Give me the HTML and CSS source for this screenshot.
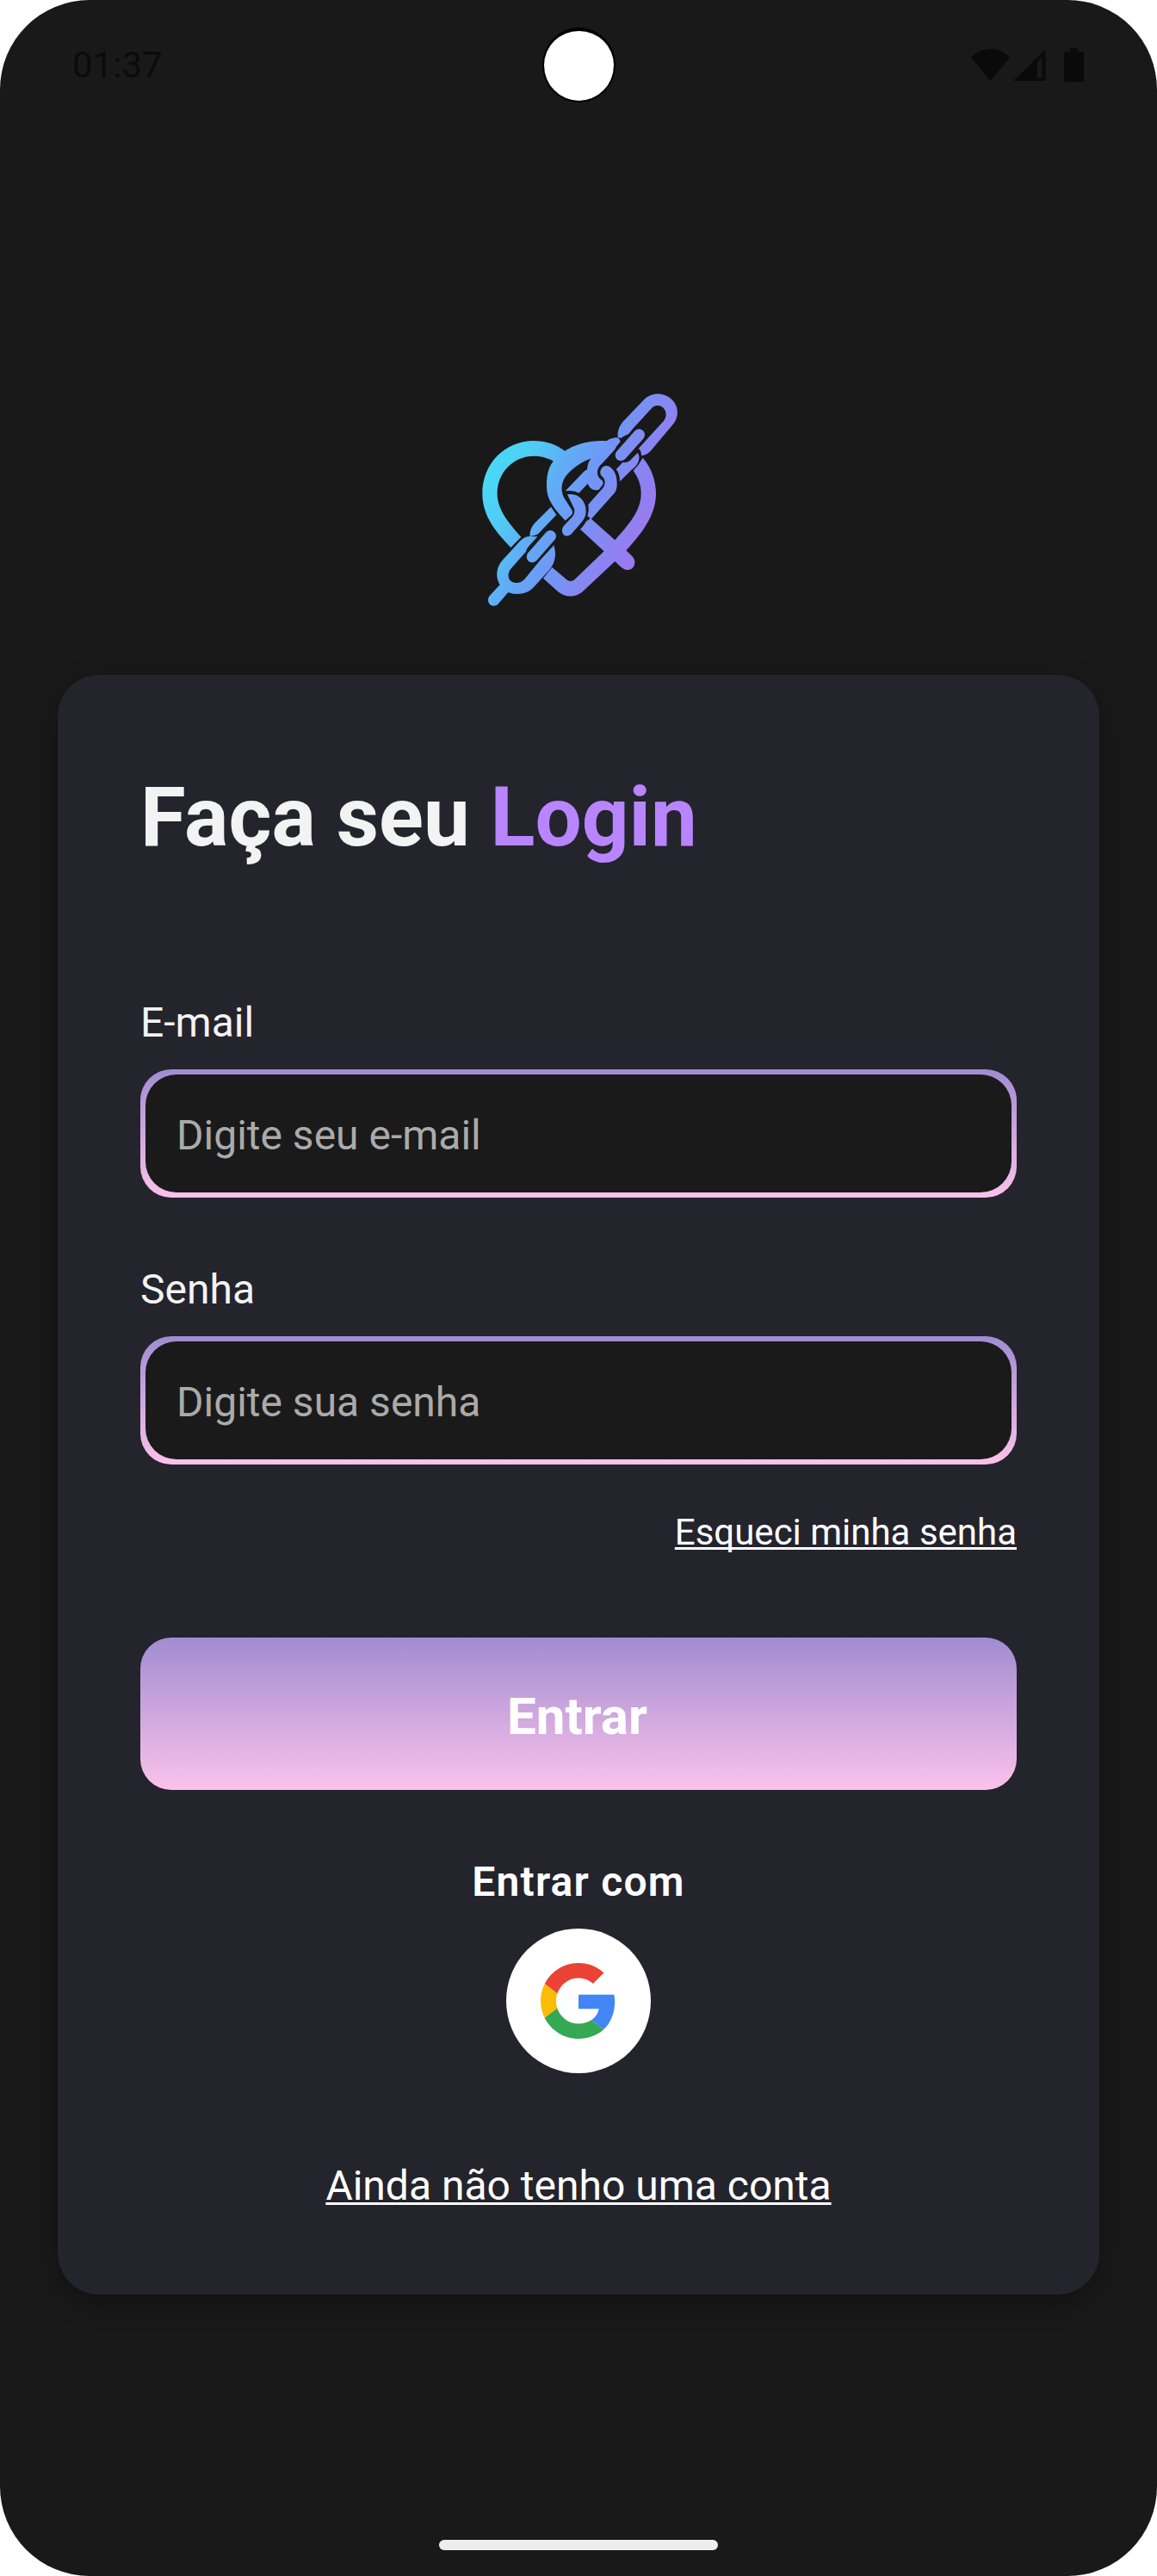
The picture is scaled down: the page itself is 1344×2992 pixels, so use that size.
FILE: index.html
```html
<!DOCTYPE html>
<html lang="pt-BR">
<head>
<meta charset="utf-8">
<title>Login</title>
<link rel="stylesheet" href="styles.css">
</head>
<body>
<div class="screen">
  <header class="status-bar">
    <span class="clock">01:37</span>
    <span class="camera"></span>
    <svg class="status-icons" viewBox="0 0 134 42" aria-hidden="true">
      <path d="M0 12.7C13 -.6 32 -.6 45 12.7L22.5 40Z"/>
      <path fill-rule="evenodd" d="M49 40L86.500 3V40ZM77 18V36.500H82.500V12.500Z"/>
      <path d="M115 2h9.300v4h4.700a2 2 0 0 1 2 2v31a2 2 0 0 1-2 2h-19a2 2 0 0 1-2-2v-31a2 2 0 0 1 2-2h5z"/>
    </svg>
  </header>

  <svg class="logo" viewBox="0 0 792 840" role="img" aria-label="Logo">
    <defs>
      <linearGradient id="brand" gradientUnits="userSpaceOnUse" x1="90" y1="300" x2="650" y2="560">
        <stop offset="0" stop-color="#48d9f6"/>
        <stop offset=".18" stop-color="#50ccf4"/>
        <stop offset=".36" stop-color="#5eaef6"/>
        <stop offset=".55" stop-color="#7097f5"/>
        <stop offset=".78" stop-color="#8985f2"/>
        <stop offset="1" stop-color="#9f76ee"/>
      </linearGradient>
    </defs>
    <g fill="url(#brand)">
      <path d="M352 254C320 228 280 216 240 216C140 216 61 295 61 400C61 480 110 535 160 588L196 551C150 500 113 455 113 400C113 325 170 269 240 269C268 269 295 277 313 290Z"/>
      <path d="M495 216C410 213 355 240 318 275C292 302 285 330 285 375C285 430 325 465 350 494L372 474C377 468 376 462 371 454L345 413C336 395 336 372 342 358C352 330 400 288 445 277Z"/>
      <path d="M533 203C531 180 540 160 556 144L624 73C650 46 695 46 722 73C747 98 747 136 722 163L655 242C643 258 630 267 615 267C615 255 611 247 605 243L692 148C705 132 703 112 690 100C678 90 662 92 652 101L586 173L570 193C560 197 548 203 545 207Z"/>
      <path d="M534 205C512 204 495 213 480 229L440 277C430 289 426 305 426 322C424 340 424 360 431 371C438 386 455 391 467 386L480 370C484 362 482 355 475 351C463 343 460 330 463 317C465 307 472 300 480 293L523 246C526 236 534 229 542 219C541 214 537 210 534 205Z"/>
      <path d="M527 316L550 291C563 293 574 288 582 278L602 258C608 266 609 277 605 287C600 302 590 310 580 318L540 358C540 340 536 325 527 316Z"/>
      <path d="M475 314C483 300 499 300 508 309C525 323 530 342 530 365C530 385 525 395 515 405L440 489L427 478C432 465 432 450 430 438L480 382C491 368 490 351 480 342C470 333 470 324 475 314Z"/>
      <path d="M350 391L412 326C418 320 424 317 429 315L428 345C428 353 429 358 431 362L397 398C383 390 368 389 350 391Z"/>
      <path d="M357 403C395 395 422 425 422 460C422 480 415 490 405 502L372 540C360 552 341 550 339 530C339 520 342 515 347 510L375 480C384 469 384 456 377 445Z"/>
      <path d="M620 275C650 310 666 355 666 400C666 480 610 545 562 598L585 620C600 638 590 665 568 666C555 666 548 660 523 636L410 742C385 763 350 763 325 742L273 695L304 657L355 700C363 707 375 706 382 700L485 601L402 524C411 515 418 506 422 497L438 486L523 562C570 510 614 460 614 400C614 370 605 345 587 320Q605 302 620 275Z"/>
      <path d="M300 446L319 474L255 541C248 546 236 547 226 549C226 530 232 515 243 503Z"/>
      <path d="M226 549C210 549 200 558 190 568L135 628C108 655 106 690 122 718L87 755C70 775 92 802 114 787L151 744C180 755 215 750 238 728L295 665C316 640 320 610 310 580L266 628L208 698C194 714 166 716 155 698C149 685 152 672 160 662L213 602C214 594 219 588 226 580L253 550Z"/>
    </g>
    <g stroke="url(#brand)" stroke-width="40" stroke-linecap="round">
      <path d="M544 266L607 195"/>
      <path d="M235 620L298 548"/>
    </g>
  </svg>

  <main class="card">
    <h1 class="title">Faça seu <span class="accent">Login</span></h1>
    <form class="form">
      <label class="label" for="email">E-mail</label>
      <div class="field"><input class="input" id="email" type="email" placeholder="Digite seu e-mail"></div>
      <label class="label label-next" for="senha">Senha</label>
      <div class="field"><input class="input" id="senha" type="password" placeholder="Digite sua senha"></div>
      <a class="link forgot" href="#">Esqueci minha senha</a>
      <button class="submit" type="button">Entrar</button>
    </form>
    <p class="social-title">Entrar com</p>
    <button class="google" type="button" aria-label="Google">
      <svg class="google-icon" viewBox="0 0 48 48">
        <path fill="#ea4335" d="M24 9.500c3.540 0 6.710 1.220 9.210 3.600l6.850-6.850C35.900 2.380 30.470 0 24 0 14.620 0 6.510 5.380 2.560 13.220l7.980 6.190C12.430 13.720 17.740 9.500 24 9.500z"/>
        <path fill="#4285f4" d="M46.980 24.550c0-1.570-.15-3.090-.38-4.550H24v9.020h12.940c-.58 2.960-2.260 5.480-4.780 7.180l7.730 6c4.510-4.180 7.090-10.360 7.090-17.650z"/>
        <path fill="#fbbc05" d="M10.530 28.590c-.48-1.450-.76-2.990-.76-4.590s.27-3.140.76-4.590l-7.980-6.190C.92 16.460 0 20.120 0 24c0 3.880.92 7.540 2.560 10.780l7.970-6.190z"/>
        <path fill="#34a853" d="M24 48c6.480 0 11.930-2.130 15.890-5.810l-7.730-6c-2.150 1.450-4.920 2.300-8.160 2.300-6.260 0-11.570-4.220-13.470-9.910l-7.980 6.190C6.510 42.620 14.620 48 24 48z"/>
      </svg>
    </button>
    <a class="link register" href="#">Ainda não tenho uma conta</a>
  </main>

  <div class="home-bar"></div>
</div>
</body>
</html>
```

FILE: styles.css
```css
* {
  box-sizing: border-box;
}

body {
  margin: 0;
  background: #fff;
  font-family: Roboto, sans-serif;
}

.screen {
  display: flex;
  flex-direction: column;
  align-items: center;
  width: 1344px;
  height: 2992px;
  border-radius: 104px;
  background: #19191a;
  overflow: hidden;
}

.status-bar {
  display: grid;
  grid-template-columns: 1fr auto 1fr;
  align-items: center;
  width: 100%;
  height: 150px;
  padding: 0 82px 0 84px;
  color: #0b0b0b;
}

.clock {
  padding-top: 1px;
  font-size: 42px;
  line-height: 50px;
}

.camera {
  width: 85px;
  height: 87px;
  margin-left: -2px;
  border: 2px solid #000;
  border-top-width: 4px;
  border-radius: 50%;
  background: #fff;
}

.status-icons {
  justify-self: end;
  width: 134px;
  height: 42px;
  fill: #0a0a0a;
}

.logo {
  width: 264px;
  height: 280px;
  margin-top: 290px;
}

.card {
  display: flex;
  flex-direction: column;
  align-items: center;
  width: 1210px;
  height: 1881px;
  margin-top: 64px;
  padding: 96px;
  border-radius: 48px;
  background: #24242d;
  box-shadow: 0 10px 30px rgba(0, 0, 0, 0.3);
}

.title {
  align-self: flex-start;
  margin: 0;
  color: #f3f3f3;
  font-size: 96px;
  font-weight: 700;
  line-height: 138px;
  white-space: nowrap;
}

.accent {
  color: #b985ff;
}

.form {
  display: flex;
  flex-direction: column;
  width: 100%;
  margin-top: 142px;
}

.label {
  color: #f3f3f3;
  font-size: 48px;
  line-height: 56px;
}

.label-next {
  margin-top: 79px;
}

.field {
  height: 149px;
  margin-top: 26px;
  padding: 6px;
  border-radius: 36px;
  background: linear-gradient(#a18cd1, #fbc2eb);
}

.input {
  display: block;
  width: 100%;
  height: 100%;
  padding: 4px 36px 0;
  border: 0;
  border-radius: 36px;
  outline: 0;
  background: #1a1a1b;
  color: #f3f3f3;
  font: 400 48px/56px Roboto, sans-serif;
}

.input::placeholder {
  color: #aaa;
  opacity: 1;
}

.link {
  color: #fff;
  text-decoration: underline;
  text-decoration-thickness: 3px;
  text-underline-offset: 3px;
  text-decoration-skip-ink: none;
}

.forgot {
  align-self: flex-end;
  margin-top: 54px;
  font-size: 42px;
  line-height: 50px;
}

.submit {
  height: 177px;
  margin-top: 97px;
  padding: 6px 3px 0 0;
  border: 0;
  border-radius: 36px;
  background: linear-gradient(#a18cd1, #fbc2eb);
  color: #fff;
  font: 700 60px/70px Roboto, sans-serif;
}

.social-title {
  margin: 79px 0 0;
  color: #fff;
  font-size: 48px;
  font-weight: 600;
  line-height: 56px;
  letter-spacing: 1.2px;
}

.google {
  display: flex;
  align-items: center;
  justify-content: center;
  width: 168px;
  height: 168px;
  margin-top: 26px;
  padding: 0;
  border: 0;
  border-radius: 50%;
  background: #fff;
}

.google-icon {
  width: 88px;
  height: 88px;
}

.register {
  margin-top: 103px;
  font-size: 48px;
  line-height: 56px;
}

.home-bar {
  width: 324px;
  height: 12px;
  margin-top: 285px;
  border-radius: 6px;
  background: #ededed;
}
```
